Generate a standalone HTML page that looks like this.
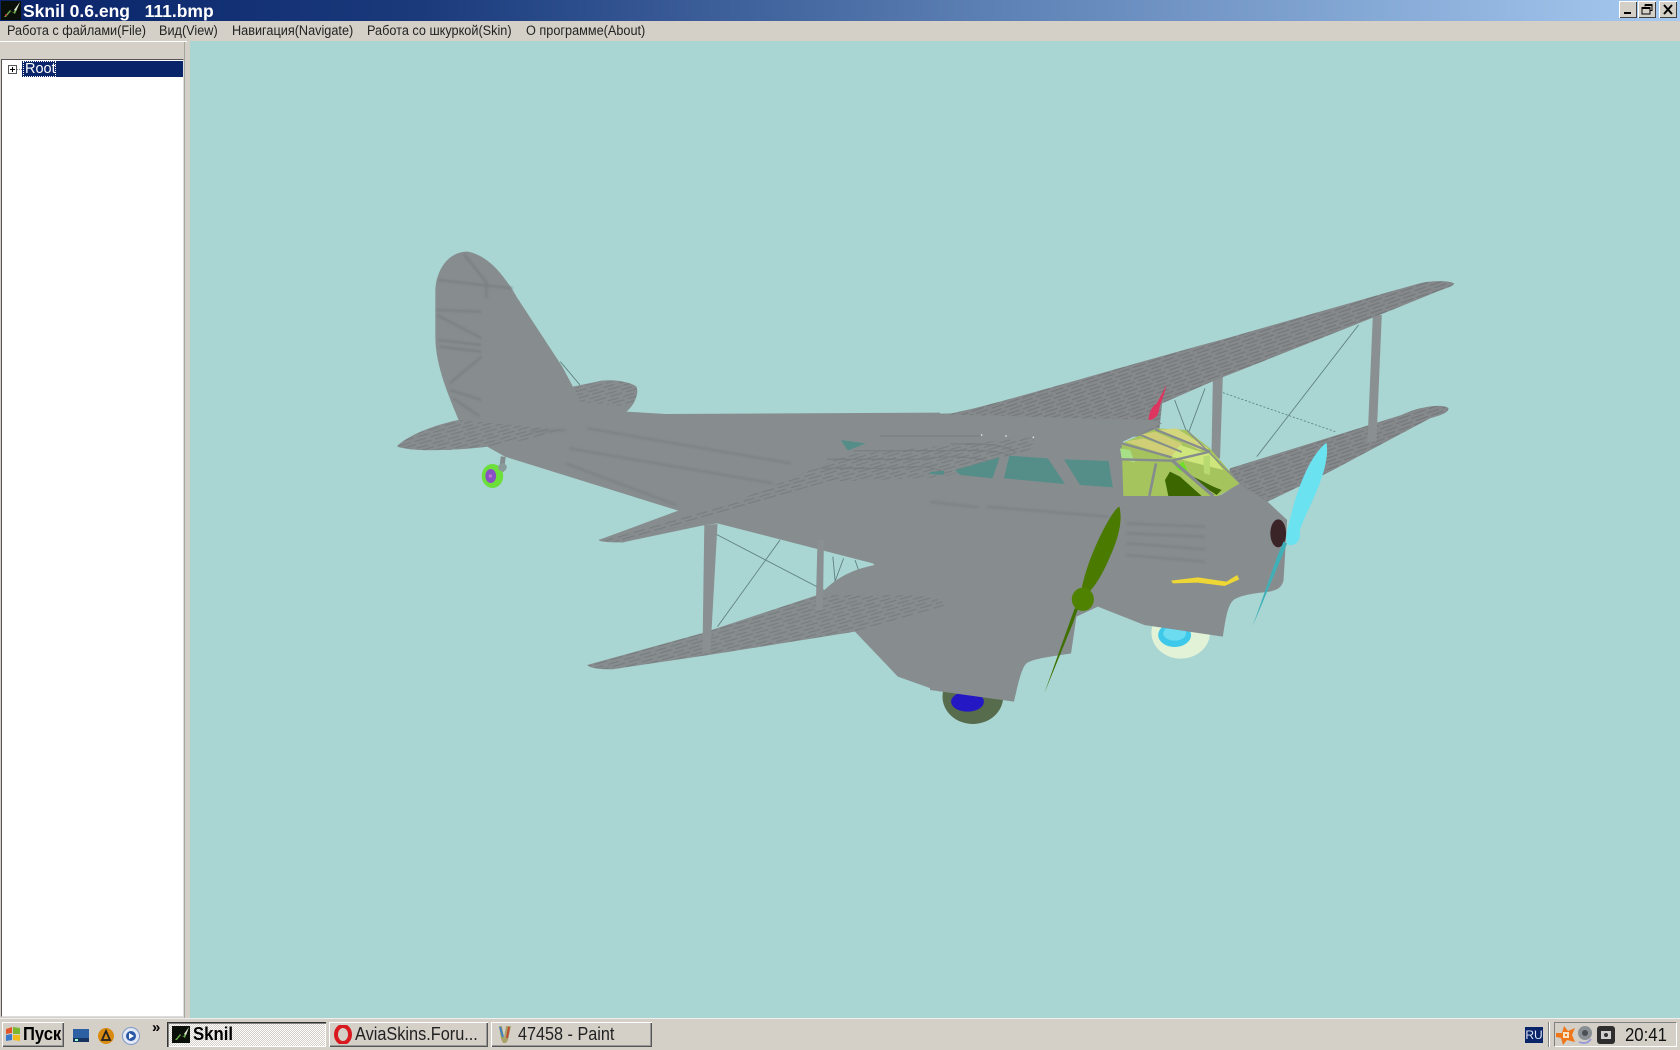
<!DOCTYPE html>
<html><head><meta charset="utf-8"><title>Sknil</title>
<style>
html,body{margin:0;padding:0;width:1680px;height:1050px;overflow:hidden;background:#d4d0c8}
body{position:relative;font-family:"Liberation Sans","DejaVu Sans",sans-serif;color:#000}
.a{position:absolute}
#tb{left:0;top:0;width:1680px;height:21px;background:linear-gradient(90deg,#0a246a 0%,#1a3a7c 25%,#5f82b6 60%,#a6caf0 100%)}
#tt{left:23px;top:1px;font-size:17.500px;line-height:20px;font-weight:bold;color:#fff;white-space:pre}
.wb{top:1px;width:18px;height:17px;background:#d4d0c8;box-shadow:inset 1px 1px 0 #fff,inset -1px -1px 0 #404040}
.m{top:22px;font-size:13.500px;line-height:18px;color:#222;white-space:nowrap;transform:scaleX(.94);transform-origin:0 0}
#cv{left:190px;top:41px;width:1490px;height:977px;background:#a9d5d3}
#pn{left:0;top:41px;width:187px;height:977px;background:#d4d0c8;border-top:1px solid #fff;box-sizing:border-box}
#tr{left:1px;top:59px;width:183px;height:958px;background:#fff;border:1px solid;border-color:#555 #ddd #ddd #555;box-sizing:border-box}
#sel{left:22px;top:61px;width:161px;height:16px;background:#0a246a}
#rt{left:23px;top:61px;height:16px;width:33px;color:#fff;font-size:14.500px;line-height:17px;outline:1px dotted #fff;outline-offset:-1px;padding-left:2px;box-sizing:border-box}
#pl{left:8px;top:65px;width:9px;height:9px;border:1px solid #555;box-sizing:border-box;background:#fff}
#tk{left:0;top:1018px;width:1680px;height:32px;background:#d4d0c8;box-shadow:inset 0 1px 0 #eee}
.bt{top:1022px;height:25px;box-sizing:border-box;background:#d4d0c8;box-shadow:inset 1px 1px 0 #fff,inset -1px -1px 0 #555,inset -2px -2px 0 #999;font-size:18px;line-height:25px;white-space:nowrap}
.bt span{display:inline-block;transform-origin:0 50%}
</style></head><body>
<div class="a" id="tb"></div>
<svg class="a" style="left:1px;top:1px" width="20" height="19" viewBox="0 0 20 19"><rect width="20" height="19" fill="#0a0f0a"/><path d="M3 16 9 9l3 3 7-11-5 12-4-3-5 6z" fill="#6aa84a"/><path d="M13 9 19 1 15 10z" fill="#dfe8d0"/><circle cx="5" cy="14" r="1" fill="#c33"/></svg>
<div class="a" id="tt">Sknil 0.6.eng   111.bmp</div>
<div class="a wb" style="left:1619px"><svg width="18" height="17"><rect x="5" y="11" width="7" height="2" fill="#000"/></svg></div>
<div class="a wb" style="left:1638px"><svg width="18" height="17"><path d="M7 3.500h7v6h-2M7 3.500v2M4 6.500h8v6.500H4z" fill="none" stroke="#000"/><path d="M4 7h8M7 4h7" stroke="#000" stroke-width="2"/></svg></div>
<div class="a wb" style="left:1659px"><svg width="18" height="17"><path d="M5 4l8 9M13 4l-8 9" stroke="#000" stroke-width="2"/></svg></div>

<div class="a m" style="left:7px">Работа с файлами(File)</div>
<div class="a m" style="left:159px">Вид(View)</div>
<div class="a m" style="left:232px">Навигация(Navigate)</div>
<div class="a m" style="left:367px">Работа со шкуркой(Skin)</div>
<div class="a m" style="left:526px">О программе(About)</div>

<div class="a" id="cv"></div>
<div class="a" id="pn"></div>
<div class="a" style="left:184px;top:42px;width:1px;height:976px;background:#a8a59e"></div>
<div class="a" id="tr"></div>
<div class="a" id="sel"></div>
<div class="a" id="pl"><svg style="position:absolute;left:0;top:0" width="7" height="7"><path d="M1 3.500h5M3.500 1v5" stroke="#000"/></svg></div>
<div class="a" style="left:17px;top:69px;width:5px;border-top:1px dotted #888"></div>
<div class="a" id="rt">Root</div>

<svg class="a" style="left:0;top:0" width="1680" height="1050" viewBox="0 0 1680 1050">
<defs>
<filter id="b" x="-10%" y="-50%" width="120%" height="200%"><feGaussianBlur stdDeviation="3"/></filter>
<pattern id="h1" width="46" height="21" patternUnits="userSpaceOnUse" patternTransform="rotate(-17)">
<rect width="46" height="21" fill="#878d8f"/><path d="M0 5h32M10 15h36" stroke="#787d7f" stroke-width="3.500"/></pattern>
<pattern id="h2" width="46" height="21" patternUnits="userSpaceOnUse" patternTransform="rotate(-20)">
<rect width="46" height="21" fill="#85898b"/><path d="M0 5h36M10 15h36" stroke="#74787a" stroke-width="3.500"/></pattern>
</defs>

<!-- wings on far right (behind body) -->
<g transform="translate(930,260) scale(.35714,.33333)">
<path d="M840,625 L1320,465 C1380,435 1440,432 1452,445 C1450,460 1430,465 1400,475 L1120,635 L945,725 L960,770 L860,730 L830,660 Z" fill="url(#h2)"/>
<g fill="none" stroke="#5f8080" stroke-width="2.500">
<path d="M1200,195 L915,590"/><path d="M820,398 L1135,515" stroke-dasharray="6 5"/><path d="M685,420 L720,520"/><path d="M770,385 L725,515"/>
</g>
<path d="M1240,165 L1265,165 L1250,545 L1225,545 Z" fill="#8a9092"/>
<path d="M792,360 L820,350 L812,595 L788,595 Z" fill="#8a9092"/>
<path d="M0,462 L60,460 C200,430 500,330 830,235 L1370,70 C1400,62 1450,60 1468,70 C1465,80 1440,85 1420,95 L1200,190 L800,360 L650,430 L640,530 L0,530 Z" fill="url(#h2)"/>
</g>

<!-- rear wheel, wires and rear body -->
<g transform="translate(380,230) scale(.35714,.33333)">
<path d="M345,680 L340,725" stroke="#868c8e" stroke-width="14" fill="none"/>
<ellipse cx="315" cy="738" rx="30" ry="36" fill="#6cdf3a"/>
<ellipse cx="310" cy="738" rx="15" ry="21" fill="#8850c4"/>
<circle cx="309" cy="738" r="5" fill="#c070d0"/>
<ellipse cx="343" cy="712" rx="12" ry="12" fill="#8a9a9a"/>
<g fill="none" stroke="#5f8080" stroke-width="2.500">
<path d="M505,395 L560,465"/>
<path d="M940,912 L1250,1085"/><path d="M1120,930 L945,1190"/><path d="M1268,980 L1275,1060"/><path d="M1298,985 L1272,1060"/><path d="M1330,990 L1340,1020"/>
</g>
<path d="M155,180 C158,120 190,65 245,65 C300,75 345,130 385,205 L510,410 L540,470 L620,452 C690,445 725,470 720,490 C715,520 700,535 690,545 L800,552 L1568,548 L1568,1385 L1450,1340 L1330,1205 L1225,1098 L1260,1065 C1300,1030 1340,1015 1385,1005 L1380,1000 L945,880 L910,885 L680,937 C640,938 615,935 612,930 L835,842 L350,680 L300,650 C230,660 120,665 70,655 C50,652 48,650 48,648 C70,625 130,590 220,570 C185,480 155,400 155,320 Z" fill="#878d8f"/>
<g fill="none" stroke="#7a8082" stroke-width="7" filter="url(#b)">
<path d="M162,150 L370,175"/><path d="M158,240 L285,245"/><path d="M160,255 L285,325"/><path d="M162,330 L285,345"/><path d="M167,350 L285,365"/>
<path d="M195,460 L285,380"/><path d="M195,480 L285,510"/><path d="M205,505 L280,560"/><path d="M235,72 L300,160"/><path d="M298,160 L298,205"/>
</g>
<path d="M285,210 L385,205 L510,410 L540,470 L560,560 L285,570 Z" fill="#878d8f"/>
<path d="M48,648 C70,625 130,590 220,570 L520,600 L430,625 L300,650 C230,660 120,665 70,655 Z" fill="url(#h1)"/>
<path d="M545,475 C600,452 690,445 718,470 C725,490 715,520 690,530 L560,515 Z" fill="url(#h1)"/>
<g fill="none" stroke="#7a8082" stroke-width="7" opacity=".8" filter="url(#b)">
<path d="M580,595 L1150,700"/><path d="M530,655 L1100,760"/><path d="M520,700 L830,825"/><path d="M420,605 L520,600"/>
</g>
</g>

<!-- wheels and front body -->
<g transform="translate(930,260) scale(.35714,.33333)">
<ellipse cx="120" cy="1310" rx="85" ry="82" fill="#566c4c"/>
<ellipse cx="105" cy="1325" rx="46" ry="30" fill="#2418c4"/>
<ellipse cx="702" cy="1118" rx="82" ry="78" fill="#e2f2d6"/>
<ellipse cx="685" cy="1125" rx="46" ry="36" fill="#3ec8ea"/>
<ellipse cx="685" cy="1120" rx="32" ry="22" fill="#6cdcf0"/>
<path d="M0,462 L615,480 L650,490 L540,545 L545,705 L815,705 L865,670 L945,725 L1000,780 L990,960 C985,985 970,990 950,995 C910,1000 870,1005 850,1020 C835,1035 830,1060 820,1130 L600,1095 L470,1040 L410,1070 L395,1180 C340,1190 290,1195 270,1210 C255,1225 245,1280 235,1325 L0,1290 Z" fill="#878d8f"/>
<g fill="none" stroke="#7a8082" stroke-width="7" opacity=".8" filter="url(#b)">
<path d="M0,725 L135,742"/><path d="M160,740 L500,770"/>
<path d="M550,790 L770,800"/><path d="M550,820 L770,830"/><path d="M550,850 L770,868"/><path d="M550,885 L770,905"/>
</g>
</g>

<!-- wings over body -->
<g transform="translate(380,230) scale(.35714,.33333)">
<path d="M580,1305 L900,1210 L1225,1095 L1500,1095 C1570,1105 1590,1120 1585,1130 L1330,1205 L920,1275 L650,1318 Q590,1318 580,1305 Z" fill="url(#h1)"/>
<path d="M612,930 L979,822 L1307,675 L1834,621 L1823,660 L1579,741 L1249,756 L854,885 L680,937 Z" fill="url(#h1)"/>
<path d="M1290,630 L1360,640 L1310,662 Z" fill="#558d88"/>
<path d="M908,885 L945,882 L925,1265 L903,1265 Z" fill="#8a9092"/>
<path d="M1225,930 L1243,930 L1240,1140 L1220,1140 Z" fill="#8a9092"/>
</g>
<g transform="translate(820,400) scale(.33333)">
<g fill="none" stroke="#767b7d" stroke-width="4" opacity=".7">
<path d="M180,108 H480"/><path d="M390,132 C480,130 560,130 590,160"/><path d="M100,152 H380 C450,150 540,150 565,165"/><path d="M20,178 H300 C380,165 480,170 520,190"/><path d="M0,205 H220 C300,195 340,200 370,215"/>
</g>
<g fill="#dfe3e3"><circle cx="485" cy="105" r="2.500"/><circle cx="558" cy="108" r="2.500"/><circle cx="640" cy="112" r="2.500"/></g>
</g>

<!-- windows -->
<g transform="translate(930,260) scale(.35714,.33333)">
<path d="M70,630 L195,592 L175,655 L85,645 Z" fill="#558d88"/>
<path d="M222,587 L330,595 L378,672 L207,655 Z" fill="#558d88"/>
<path d="M375,598 L500,603 L512,682 L420,675 Z" fill="#558d88"/>
<path d="M0,636 L40,632 L38,645 L0,642 Z" fill="#558d88"/>
</g>

<!-- canopy -->
<g transform="translate(1100,420) scale(.33333)">
<path d="M65,70 L170,25 L260,30 L330,85 L420,190 L355,228 L70,228 Z" fill="#a6c45e"/>
<path d="M75,65 L130,55 L240,95 L215,110 Z" fill="#d0cf78"/>
<path d="M115,45 L165,35 L245,70 L245,95 Z" fill="#cfce76"/>
<path d="M170,30 L230,25 L325,85 L300,90 Z" fill="#d4d67c"/>
<path d="M215,110 L240,75 L300,95 L330,100 L370,150 L250,120 Z" fill="#cfe67c"/>
<path d="M310,110 L330,105 L330,165 L312,160 Z" fill="#b8d870"/>
<path d="M60,85 L90,90 L105,128 L65,115 Z" fill="#a8e088"/>
<path d="M210,155 L195,180 L205,228 L305,228 L240,170 Z" fill="#3b6600"/>
<path d="M250,155 L340,200 L365,210 L350,225 L320,205 Z" fill="#3b6600"/>
<path d="M225,140 L250,125 L262,150 L240,155 Z" fill="#6fe028"/>
<g fill="none" stroke="#868c8e">
<path d="M65,70 L215,112" stroke-width="7"/><path d="M115,42 L245,96" stroke-width="6"/><path d="M165,28 L330,95" stroke-width="7"/><path d="M65,118 L215,122 L330,95" stroke-width="7"/>
<path d="M215,120 L340,228" stroke-width="10"/><path d="M168,130 L148,228" stroke-width="8"/><path d="M260,30 L420,190" stroke-width="4"/>
</g>
</g>

<g transform="translate(930,260) scale(.35714,.33333)">
<path d="M662,375 C655,410 645,430 642,445 C640,470 625,480 612,480 C612,460 620,440 635,430 C645,410 655,390 662,375 Z" fill="#dd3560"/>
<path d="M530,740 C540,780 530,830 500,900 C480,950 455,990 440,1000 L425,985 C435,930 460,860 490,800 C505,770 520,745 530,740 Z" fill="#4a7a00"/>
<path d="M415,1045 L400,1090 L320,1300 L390,1090 L405,1045 Z" fill="#3f7000"/>
<ellipse cx="428" cy="1018" rx="31" ry="35" fill="#4f8200"/>
<path d="M675,962 L750,952 L830,965 L860,945 L866,958 L825,978 L750,968 L680,970 Z" fill="#eed634"/>
<ellipse cx="975" cy="820" rx="22" ry="42" fill="#3a2428"/>
<path d="M1110,548 C1118,590 1100,650 1080,700 C1060,750 1040,790 1035,815 C1040,840 1025,858 1005,855 C990,845 1000,810 1010,770 C1025,700 1060,590 1110,548 Z" fill="#6be2f0"/>
<path d="M1000,850 L985,890 L903,1100 L972,890 L990,845 Z" fill="#3fb0b8"/>
</g>
</svg>

<!-- taskbar -->
<div class="a" id="tk"></div>
<div class="a bt" style="left:2px;width:62px;font-weight:bold;padding-left:21px"><span style="transform:scaleX(.92)">Пуск</span>
<svg class="a" style="left:3px;top:4px" width="16" height="16"><path d="M1 3 7 1v6L1 8z" fill="#e2572a"/><path d="M8 1l7 1v6H8z" fill="#7cb82f"/><path d="M1 9l6-1v6l-6 1z" fill="#3a78c9"/><path d="M8 9h7v6l-7-1z" fill="#f2bb1a"/></svg></div>
<svg class="a" style="left:72px;top:1027px" width="70" height="18">
<rect x="1" y="2" width="16" height="13" fill="#2d5fa3"/><rect x="1" y="11" width="16" height="4" fill="#16345f"/><rect x="3" y="12" width="3" height="2" fill="#9fc"/>
<circle cx="34" cy="9" r="8" fill="#d98a10"/><path d="M34 4l4 9h-8z" fill="none" stroke="#222" stroke-width="1.800"/>
<circle cx="59" cy="9" r="8.500" fill="#e2e9f4" stroke="#7f97c6"/><circle cx="59" cy="9" r="5" fill="#2a56a6"/><path d="M57 6l5 3-5 3z" fill="#fff"/>
</svg>
<div class="a" style="left:152px;top:1020px;font-size:15px;font-weight:bold;line-height:16px">»</div>
<div class="a bt" style="left:167px;width:159px;font-weight:bold;padding-left:26px;background-color:#eceae4;background-image:repeating-conic-gradient(#fff 0 25%,#d4d0c8 0 50%);background-size:2px 2px;box-shadow:inset 1px 1px 0 #333,inset 2px 2px 0 #808080,inset -1px -1px 0 #fff"><span style="transform:scaleX(.93)">Sknil</span>
<svg class="a" style="left:5px;top:4px" width="18" height="17"><rect width="18" height="17" fill="#0a0f0a"/><path d="M3 14 8 8l3 3 6-10-4 11-4-3-4 5z" fill="#6aa84a"/><path d="M12 8 17 1 14 9z" fill="#dfe8d0"/></svg></div>
<div class="a bt" style="left:329px;width:159px;padding-left:26px;color:#222"><span style="transform:scaleX(.905)">AviaSkins.Foru...</span>
<svg class="a" style="left:5px;top:3px" width="18" height="19"><ellipse cx="9" cy="9.500" rx="7" ry="8.500" fill="none" stroke="#d81a20" stroke-width="4"/></svg></div>
<div class="a bt" style="left:491px;width:161px;padding-left:27px;color:#222"><span style="transform:scaleX(.9)">47458 - Paint</span>
<svg class="a" style="left:6px;top:3px" width="16" height="19"><path d="M2 1h3l2 12 2-12h5l-3 14-2 3H6L4 14z" fill="#a9a36a"/><path d="M3 2l3 10" stroke="#3c7fc0" stroke-width="2"/><path d="M12 2l-2 11" stroke="#c04a30" stroke-width="2"/></svg></div>

<div class="a" style="left:1525px;top:1027px;width:18px;height:16px;background:#0a246a;color:#dfe6f5;font-size:12px;line-height:16px;text-align:center">RU</div>
<div class="a" style="left:1548px;top:1022px;width:1px;height:25px;background:#808080;box-shadow:1px 0 0 #fff"></div>
<div class="a" style="left:1554px;top:1022px;width:123px;height:25px;box-sizing:border-box;border:1px solid;border-color:#808080 #fff #fff #808080"></div>
<svg class="a" style="left:1553px;top:1024px" width="66" height="23">
<path d="M3 9 9 9 11 2 15 7 22 4 19 11 22 18 14 16 10 21 8 14 3 13Z" fill="#f0761a"/><rect x="10" y="8" width="6" height="6" fill="#f7e3c4"/><rect x="12" y="10" width="2" height="2" fill="#f0761a"/>
<circle cx="32" cy="9" r="7" fill="#8a8f96"/><circle cx="32" cy="9" r="3" fill="#4a4f56"/><path d="M26 18q8 3 12-3" stroke="#9a9ad8" stroke-width="2" fill="none"/>
<rect x="44" y="2" width="18" height="18" rx="3" fill="#2e2e2e"/><rect x="48" y="7" width="10" height="8" fill="#cfcfcf"/><circle cx="53" cy="11" r="2" fill="#333"/>
</svg>
<div class="a" style="left:1625px;top:1023px;font-size:18px;line-height:24px;color:#111;white-space:nowrap;transform:scaleX(.93);transform-origin:0 0">20:41</div>
</body></html>
